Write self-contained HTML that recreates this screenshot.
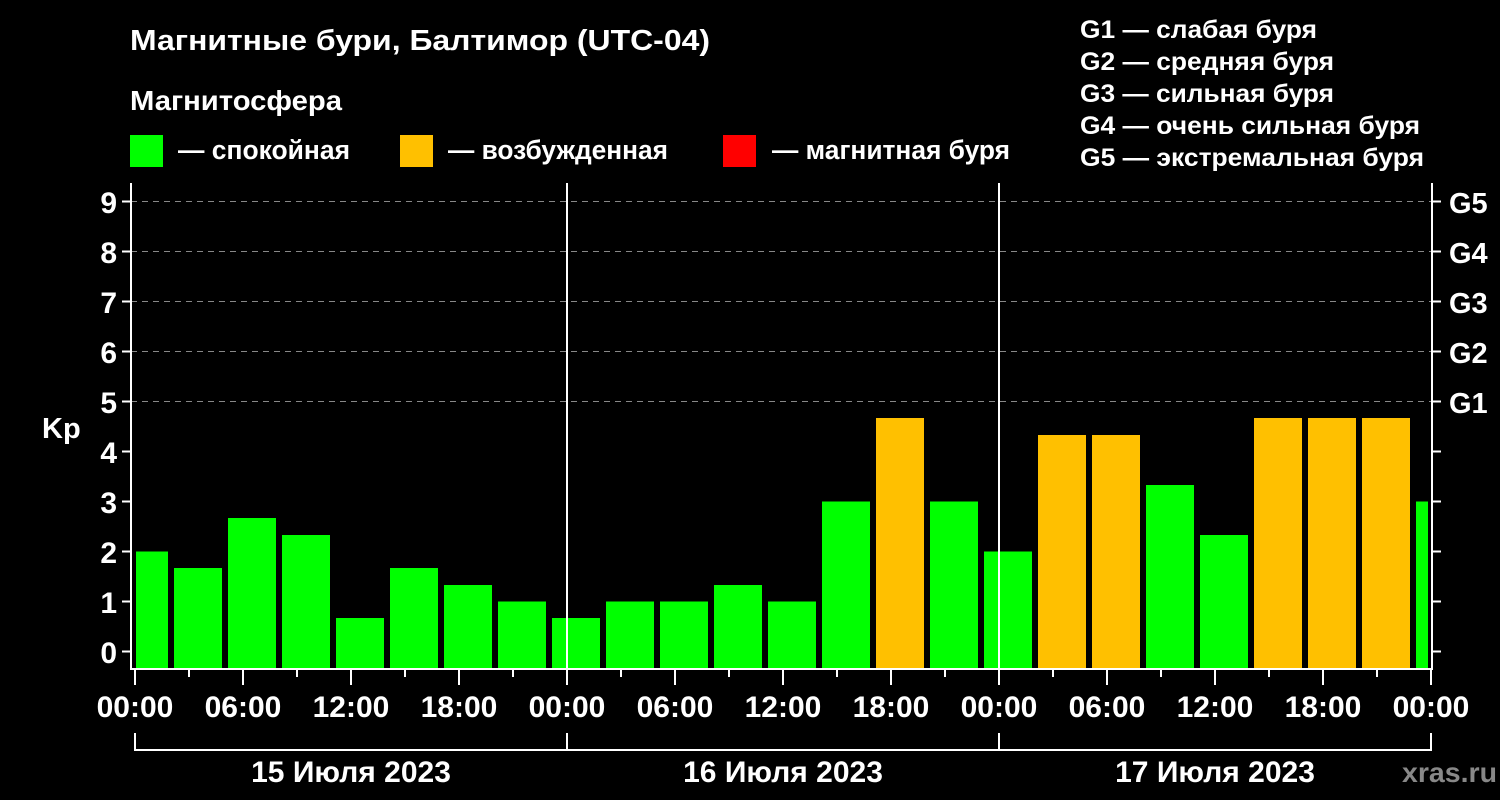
<!DOCTYPE html>
<html><head><meta charset="utf-8"><style>
html,body{margin:0;padding:0;background:#000;width:1500px;height:800px;overflow:hidden}
svg text{font-family:"Liberation Sans",Arial,sans-serif;font-weight:bold;fill:#fff}
</style></head><body>
<svg width="1500" height="800" xmlns="http://www.w3.org/2000/svg">
<rect width="1500" height="800" fill="#000"/>
<text x="130" y="50" font-size="29" textLength="580" lengthAdjust="spacingAndGlyphs">Магнитные бури, Балтимор (UTC-04)</text>
<text x="130" y="110" font-size="28" textLength="212" lengthAdjust="spacingAndGlyphs">Магнитосфера</text>
<rect x="130" y="135" width="33" height="32" fill="#00ff00"/>
<text x="178" y="159" font-size="27" textLength="172" lengthAdjust="spacingAndGlyphs">— спокойная</text>
<rect x="400" y="135" width="33" height="32" fill="#ffc000"/>
<text x="448" y="159" font-size="27" textLength="220" lengthAdjust="spacingAndGlyphs">— возбужденная</text>
<rect x="723" y="135" width="33" height="32" fill="#ff0000"/>
<text x="772" y="159" font-size="27" textLength="238" lengthAdjust="spacingAndGlyphs">— магнитная буря</text>
<g font-size="25">
<text x="1080" y="38" textLength="237" lengthAdjust="spacingAndGlyphs">G1 — слабая буря</text>
<text x="1080" y="70" textLength="254" lengthAdjust="spacingAndGlyphs">G2 — средняя буря</text>
<text x="1080" y="102" textLength="254" lengthAdjust="spacingAndGlyphs">G3 — сильная буря</text>
<text x="1080" y="134" textLength="340" lengthAdjust="spacingAndGlyphs">G4 — очень сильная буря</text>
<text x="1080" y="166" textLength="344" lengthAdjust="spacingAndGlyphs">G5 — экстремальная буря</text>
</g>
<g stroke="#888" stroke-width="1" stroke-dasharray="6,5">
<line x1="131" y1="201.5" x2="1432" y2="201.5"/>
<line x1="131" y1="251.5" x2="1432" y2="251.5"/>
<line x1="131" y1="301.5" x2="1432" y2="301.5"/>
<line x1="131" y1="351.5" x2="1432" y2="351.5"/>
<line x1="131" y1="401.5" x2="1432" y2="401.5"/>
</g>
<g fill="#00ff00">
<rect x="136" y="551.5" width="32" height="116.5"/>
<rect x="174" y="568" width="48" height="100"/>
<rect x="228" y="518" width="48" height="150"/>
<rect x="282" y="535" width="48" height="133"/>
<rect x="336" y="618" width="48" height="50"/>
<rect x="390" y="568" width="48" height="100"/>
<rect x="444" y="585" width="48" height="83"/>
<rect x="498" y="601.5" width="48" height="66.5"/>
<rect x="552" y="618" width="48" height="50"/>
<rect x="606" y="601.5" width="48" height="66.5"/>
<rect x="660" y="601.5" width="48" height="66.5"/>
<rect x="714" y="585" width="48" height="83"/>
<rect x="768" y="601.5" width="48" height="66.5"/>
<rect x="822" y="501.5" width="48" height="166.5"/>
<rect x="930" y="501.5" width="48" height="166.5"/>
<rect x="984" y="551.5" width="48" height="116.5"/>
<rect x="1146" y="485" width="48" height="183"/>
<rect x="1200" y="535" width="48" height="133"/>
<rect x="1416" y="501.5" width="12" height="166.5"/>
</g>
<g fill="#ffc000">
<rect x="876" y="418" width="48" height="250"/>
<rect x="1038" y="435" width="48" height="233"/>
<rect x="1092" y="435" width="48" height="233"/>
<rect x="1254" y="418" width="48" height="250"/>
<rect x="1308" y="418" width="48" height="250"/>
<rect x="1362" y="418" width="48" height="250"/>
</g>
<g stroke="#fff" stroke-width="2" fill="none">
<line x1="567" y1="183" x2="567" y2="668"/>
<line x1="999" y1="183" x2="999" y2="668"/>
<path d="M131 183 V669 H1432 V183"/>
<path d="M122 651.5h9M122 601.5h9M122 551.5h9M122 501.5h9M122 451.5h9M122 401.5h9M122 351.5h9M122 301.5h9M122 251.5h9M122 201.5h9"/>
<path d="M1432 651.5h9M1432 601.5h9M1432 551.5h9M1432 501.5h9M1432 451.5h9M1432 401.5h9M1432 351.5h9M1432 301.5h9M1432 251.5h9M1432 201.5h9"/>
<path d="M135 669v16M189 669v8M243 669v16M297 669v8M351 669v16M405 669v8M459 669v16M513 669v8M567 669v16M621 669v8M675 669v16M729 669v8M783 669v16M837 669v8M891 669v16M945 669v8M999 669v16M1053 669v8M1107 669v16M1161 669v8M1215 669v16M1269 669v8M1323 669v16M1377 669v8M1431 669v16"/>
<path d="M135 733 V750 H1431 V733 M567 733 V750 M999 733 V750"/>
</g>
<g font-size="30" text-anchor="end">
<text x="117" y="663">0</text><text x="117" y="613">1</text><text x="117" y="563">2</text><text x="117" y="513">3</text><text x="117" y="463">4</text><text x="117" y="413">5</text><text x="117" y="363">6</text><text x="117" y="313">7</text><text x="117" y="263">8</text><text x="117" y="213">9</text>
</g>
<g font-size="29">
<text x="1449" y="413">G1</text><text x="1449" y="363">G2</text><text x="1449" y="313">G3</text><text x="1449" y="263">G4</text><text x="1449" y="213">G5</text>
</g>
<text x="42" y="438" font-size="29">Kp</text>
<g font-size="30" text-anchor="middle">
<text x="135" y="717">00:00</text><text x="243" y="717">06:00</text><text x="351" y="717">12:00</text><text x="459" y="717">18:00</text>
<text x="567" y="717">00:00</text><text x="675" y="717">06:00</text><text x="783" y="717">12:00</text><text x="891" y="717">18:00</text>
<text x="999" y="717">00:00</text><text x="1107" y="717">06:00</text><text x="1215" y="717">12:00</text><text x="1323" y="717">18:00</text>
<text x="1431" y="717">00:00</text>
<text x="351" y="782">15 Июля 2023</text><text x="783" y="782">16 Июля 2023</text><text x="1215" y="782">17 Июля 2023</text>
</g>
<text x="1402" y="782" font-size="28" style="fill:#888" textLength="95" lengthAdjust="spacingAndGlyphs">xras.ru</text>
</svg>
</body></html>
